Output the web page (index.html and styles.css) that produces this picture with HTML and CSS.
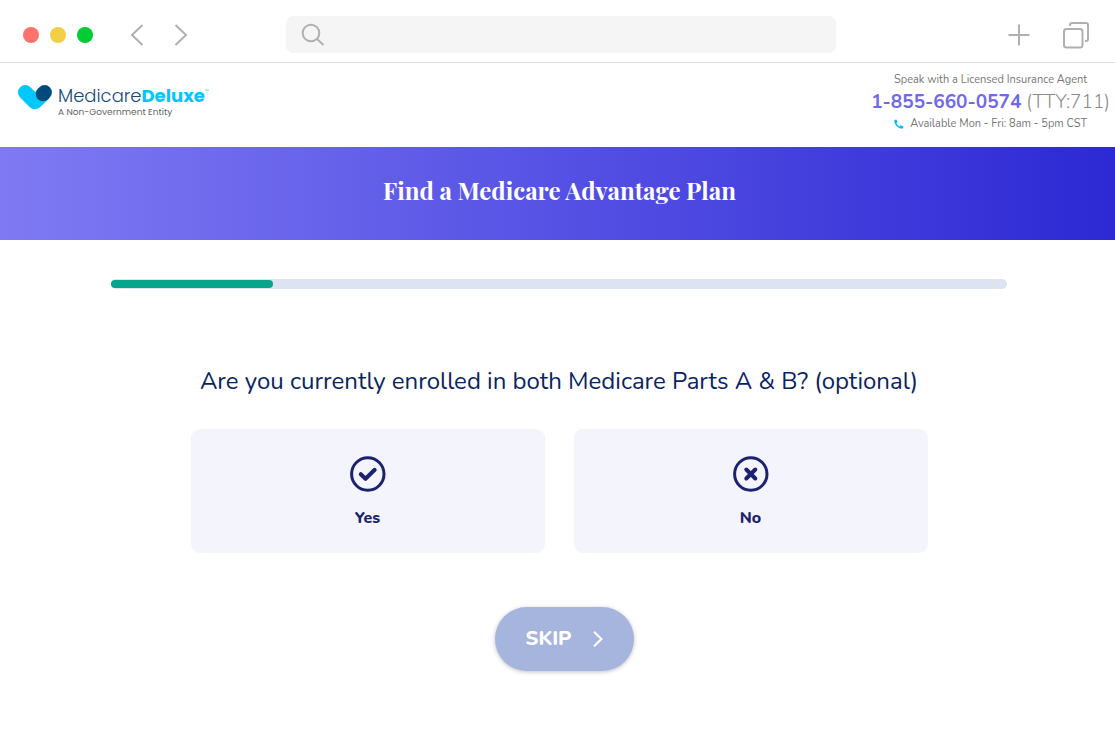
FILE: index.html
```html
<!DOCTYPE html>
<html lang="en">
<head>
<meta charset="utf-8">
<meta name="viewport" content="width=device-width, initial-scale=1">
<title>Find a Medicare Advantage Plan</title>
<link rel="stylesheet" href="styles.css">
</head>
<body>
<div class="toolbar">
  <div class="toolbar-left">
    <div class="lights"><span class="light red"></span><span class="light yellow"></span><span class="light green"></span></div>
    <div class="history">
      <button class="tool" type="button" aria-label="Back"><svg width="14" height="22" viewBox="0 0 14 22"><path d="M12.500 1 2 11l10.500 10"/></svg></button>
      <button class="tool" type="button" aria-label="Forward"><svg width="14" height="22" viewBox="0 0 14 22"><path d="m1.500 1 10.500 10-10.500 10"/></svg></button>
    </div>
  </div>
  <label class="address">
    <svg width="24" height="24" viewBox="0 0 24 24"><circle cx="10" cy="10" r="8.300"/><path d="m16 16 6.500 6"/></svg>
    <input type="text" aria-label="Address">
  </label>
  <div class="toolbar-right">
    <button class="tool" type="button" aria-label="New tab"><svg width="22" height="22" viewBox="0 0 22 22"><path d="M11 .5v21M.5 11h21"/></svg></button>
    <button class="tool" type="button" aria-label="Show tabs"><svg width="28" height="28" viewBox="0 0 28 28"><rect x="2" y="8" width="18.500" height="18.500" rx="2.500"/><path d="M8 5V4a2 2 0 0 1 2-2h14a2 2 0 0 1 2 2v14a2 2 0 0 1-2 2h-1"/></svg></button>
  </div>
</div>
<header class="header">
  <a class="brand" href="#">
    <svg width="34" height="25" viewBox="0 0 34 25"><path d="M7.300 7.400 17 17l7.500-7" fill="none" stroke="#00c8ff" stroke-width="14.600" stroke-linecap="round" stroke-linejoin="round"/><path d="m25 9 1.600-1.600" fill="none" stroke="#004a7c" stroke-width="14.600" stroke-linecap="round"/></svg>
    <span class="brand-text">
      <span class="brand-name">Medicare<b>Deluxe</b><small>™</small></span>
      <span class="brand-tag">A Non-Government Entity</span>
    </span>
  </a>
  <div class="contact">
    <p class="contact-note">Speak with a Licensed Insurance Agent</p>
    <p class="contact-phone"><a href="tel:18556600574">1-855-660-0574</a> (TTY:711)</p>
    <p class="contact-note"><svg width="10" height="10" viewBox="0 0 10 10"><path d="M.4 1.100 2.300.5l1.300 2.600-1.200 1c.6 1.500 1.500 2.500 3.300 3.400l1-1.200 2.800 1.200-.6 2C5 10.300-.4 5.500.4 1.100z"/></svg>Available Mon - Fri: 8am - 5pm CST</p>
  </div>
</header>
<div class="banner"><h1>Find a Medicare Advantage Plan</h1></div>
<main class="main">
  <div class="progress" role="progressbar" aria-label="Progress" aria-valuenow="18" aria-valuemin="0" aria-valuemax="100"><div class="progress-fill" style="width:18.100%"></div></div>
  <h2 class="question">Are you currently enrolled in both Medicare Parts A &amp; B? (optional)</h2>
  <div class="choices">
    <button class="choice" type="button">
      <svg width="36" height="36" viewBox="0 0 36 36"><circle cx="17.800" cy="18" r="16.200"/><path class="mark" d="m10.800 18.200 4.700 4.600 9.200-9"/></svg>
      Yes
    </button>
    <button class="choice" type="button">
      <svg width="36" height="36" viewBox="0 0 36 36"><circle cx="17.800" cy="18" r="16.200"/><path class="mark" d="m13.300 13.500 9 9m0-9-9 9"/></svg>
      No
    </button>
  </div>
  <button class="skip" type="button">SKIP<svg width="10" height="16" viewBox="0 0 10 16"><path d="m1 .8 7.500 7.200L1 15.200"/></svg></button>
</main>
</body>
</html>
```
FILE: styles.css
```css
* { box-sizing: border-box; }
body { margin: 0; background: #fff; font-family: Nunito, Lato, sans-serif; color: #0a2463; }
p, h1, h2 { margin: 0; }
button { border: 0; padding: 0; font: inherit; color: inherit; cursor: pointer; }
svg { display: block; flex: none; }

.toolbar { display: grid; grid-template-columns: 263px minmax(0, 550px) 1fr; align-items: center; padding: 16px 25px 9px 23px; border-bottom: 1px solid #e2e2e2; }
.toolbar svg { fill: none; stroke: #b0b0b0; stroke-width: 2; }
.toolbar-left, .lights, .history, .toolbar-right { display: flex; align-items: center; }
.toolbar-left { gap: 37px; }
.lights { gap: 11px; }
.light { width: 16px; height: 16px; border-radius: 50%; }
.red { background: #fc746c; }
.yellow { background: #f4ce46; }
.green { background: #00cc33; }
.history { gap: 30px; }
.tool { background: none; }
.address { display: flex; align-items: center; gap: 8px; height: 37px; padding: 0 15px; border-radius: 7px; background: #f5f5f5; }
.address input { flex: 1; min-width: 0; border: 0; outline: 0; background: none; font: inherit; }
.toolbar-right { justify-content: flex-end; gap: 32px; }

.header { display: flex; justify-content: space-between; align-items: flex-start; padding: 7px 5px 13px 18px; }
.brand { display: flex; align-items: flex-start; gap: 6px; padding-top: 15px; color: #174a7c; text-decoration: none; font-family: Poppins, Lato, sans-serif; }
.brand-text { display: flex; flex-direction: column; }
.brand-name { display: flex; font-size: 18px; line-height: 22px; font-weight: 300; }
.brand-name b { color: #00c8ff; font-weight: 700; }
.brand-name small { color: #00c8ff; font-size: 5px; line-height: 14px; }
.brand-tag { color: #666; font-size: 9px; line-height: 10px; }
.contact { text-align: center; color: #777; }
.contact-note { display: flex; justify-content: center; align-items: center; gap: 6px; font-size: 11px; line-height: 20px; }
.contact-note svg { fill: #00bdf2; }
.contact-phone { font-size: 19px; line-height: 24px; color: #888; font-weight: 300; }
.contact-phone a { color: #6f69ee; font-weight: 700; text-decoration: none; }

.banner { padding: 26px 20px 32px 24px; background: linear-gradient(90deg, #7f7af3, #5753e5 48%, #2d29d4); color: #fff; text-align: center; }
.banner h1 { font-family: "Playfair Display", "Liberation Serif", serif; font-size: 24px; line-height: 35px; font-weight: 700; }

.main { display: flex; flex-direction: column; align-items: center; padding: 39px 108px 72px 111px; }
.progress { width: 100%; height: 10px; padding: 1px 0; border-radius: 5px; background: #dee3f1; }
.progress-fill { height: 8px; border-radius: 4px; background: #06a58c; }
.question { margin-top: 74px; font-size: 24px; line-height: 36px; font-weight: 400; text-align: center; }
.choices { display: grid; grid-template-columns: 1fr 1fr; gap: 29px; width: 100%; max-width: 737px; margin-top: 30px; }
.choice { display: flex; flex-direction: column; align-items: center; gap: 16px; padding: 27px 16px 25px; border-radius: 9px; background: #f4f4fd; color: #1b2371; font-size: 16px; line-height: 20px; font-weight: 800; }
.choice svg { fill: none; stroke: #1b2371; stroke-width: 3; }
.choice .mark { stroke-width: 4; stroke-linecap: round; stroke-linejoin: round; }
.skip { display: flex; align-items: center; justify-content: center; gap: 22px; margin: 54px 0 0 11px; padding: 18px 31px; border-radius: 32px; background: #a6b5de; color: #fff; font-size: 20px; line-height: 28px; font-weight: 800; box-shadow: 0 1px 4px rgb(0 0 0 / 25%); }
.skip svg { fill: none; stroke: #fff; stroke-width: 2; }
```
